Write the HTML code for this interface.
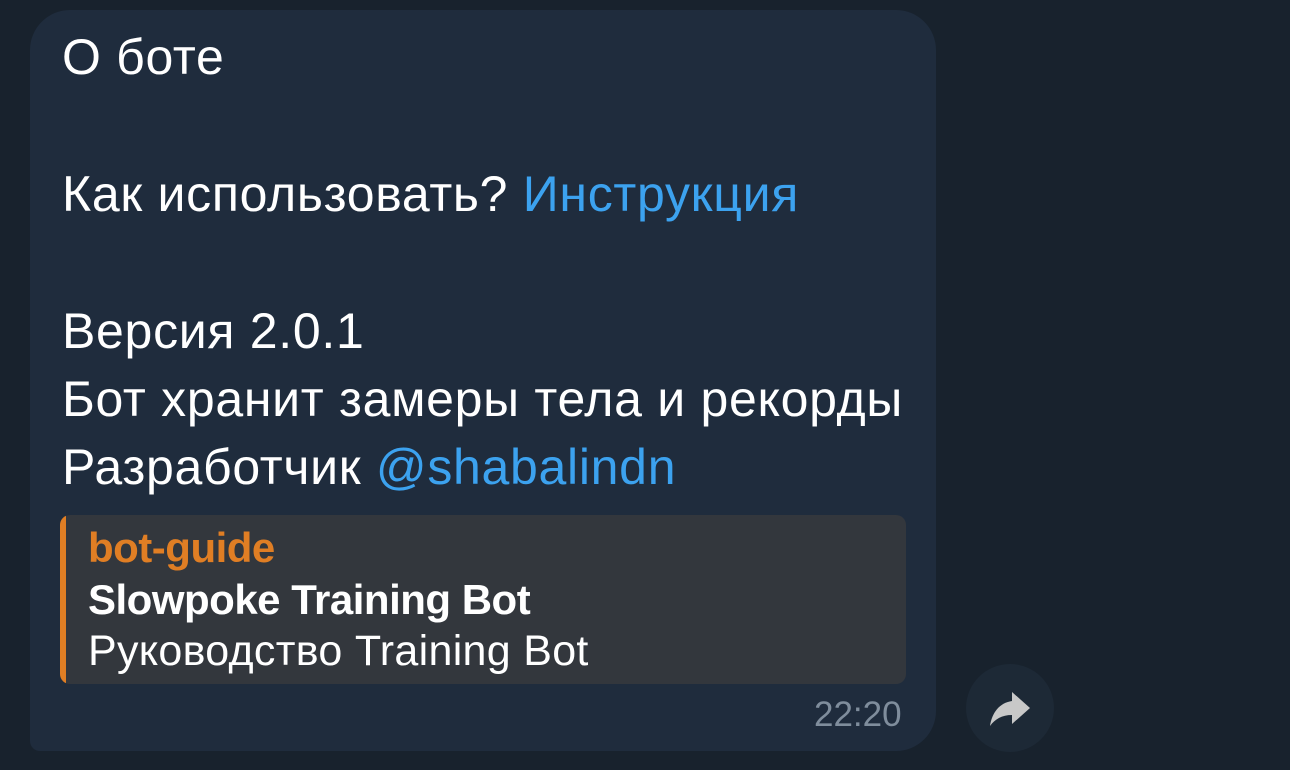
<!DOCTYPE html>
<html><head><meta charset="utf-8"><style>
html,body{margin:0;padding:0}
body{width:1290px;height:770px;overflow:hidden;background:#18222d;font-family:"Liberation Sans","Noto Sans CJK SC",sans-serif;position:relative}
.b{position:absolute;left:30px;top:10px;width:906px;height:741px;background:#1f2c3d;border-radius:40px 40px 40px 10px}
.t{position:absolute;left:62px;color:#fff;font-size:50px;letter-spacing:0.7px;white-space:nowrap;line-height:1}
.l{color:#3ca2ef}
.p{position:absolute;left:60px;top:515px;width:846px;height:169px;background:#33373d;border-radius:10px;overflow:hidden}
.p:before{content:"";position:absolute;left:0;top:0;bottom:0;width:6px;background:#e07e24}
.q{position:absolute;left:28px;font-size:43px;letter-spacing:0.3px;white-space:nowrap;line-height:1;color:#fff}
.q.bd{font-weight:bold;font-size:42px;letter-spacing:-0.5px}
.tm{position:absolute;left:814px;top:697px;font-size:35px;color:#7f8d9c;line-height:1}
.f{position:absolute;left:966px;top:664px;width:88px;height:88px;border-radius:50%;background:#1d2936}
</style></head><body>
<div class="b"></div>
<div class="t" style="top:32px">О боте</div>
<div class="t" style="top:169px">Как использовать? <span class="l">Инструкция</span></div>
<div class="t" style="top:306px">Версия 2.0.1</div>
<div class="t" style="top:374px">Бот хранит замеры тела и рекорды</div>
<div class="t" style="top:442px">Разработчик <span class="l">@shabalindn</span></div>
<div class="p">
<div class="q bd" style="top:12px;color:#e07e24">bot-guide</div>
<div class="q bd" style="top:64px">Slowpoke Training Bot</div>
<div class="q" style="top:115px">Руководство Training Bot</div>
</div>
<div class="tm">22:20</div>
<div class="f"><svg width="88" height="88" viewBox="0 0 88 88"><path d="M46 28 L64 44 L46 60 L46 51 C36 51 29 55 24 62 C26 49 33 39 46 37 Z" fill="#c8c8c8"/></svg></div>
</body></html>
